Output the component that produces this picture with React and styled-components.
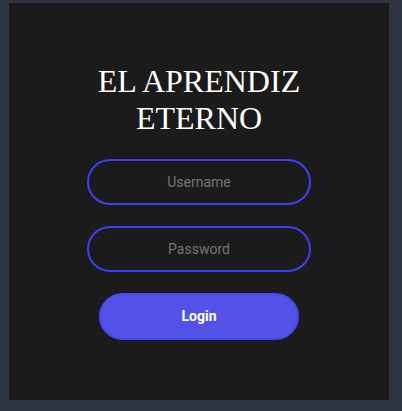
import styled, { createGlobalStyle } from "styled-components"

const Global = createGlobalStyle`
body{
    margin: 0;
    background: #2e3440;
    font-family: Roboto, "Liberation Sans", sans-serif;
}
`

export default function App(){
    return(<>
    <Global />
    <Page>
    <Card>
        <Title>EL APRENDIZ<br/>ETERNO</Title>
        <Form>
            <Input placeholder="Username" />
            <Input placeholder="Password" type="password" />
            <Button>Login</Button>
        </Form>
    </Card>
    </Page></>)
}

const Page=styled.div`
width: 100%;
height: 411px;
padding: 3px 13px 11px 9px;
box-sizing: border-box;
`

const Card=styled.div`
width: 380px;
height: 397px;
background: #1b1b1b;
display: flex;
flex-direction: column;
align-items: center;
padding-top: 60px;
box-sizing: border-box;
`

const Title=styled.h1`
margin: 0 0 22px 0;
font-family: "Liberation Serif", "Times New Roman", serif;
font-weight: normal;
font-size: 32px;
line-height: 36.8px;
color: #ffffff;
text-align: center;
`

const Form=styled.div`
display: flex;
flex-direction: column;
align-items: center;
gap: 21px;
`

const Input=styled.input`
width: 224px;
height: 46px;
box-sizing: border-box;
border-radius: 23px;
border: 2px solid #3f3ff5;
background: transparent;
color: white;
font-family: Roboto, "Liberation Sans", sans-serif;
font-size: 14px;
text-align: center;
outline: none;
::placeholder{
    color: #757575;
}
&::placeholder{
    color: #757575;
}
`

const Button=styled.button`
width: 200px;
height: 47px;
box-sizing: border-box;
border-radius: 24px;
border: 2px solid #4848ee;
background: #5252e8;
color: #ffffff;
font-family: Roboto, "Liberation Sans", sans-serif;
font-weight: bold;
font-size: 14px;
cursor: pointer;
`
